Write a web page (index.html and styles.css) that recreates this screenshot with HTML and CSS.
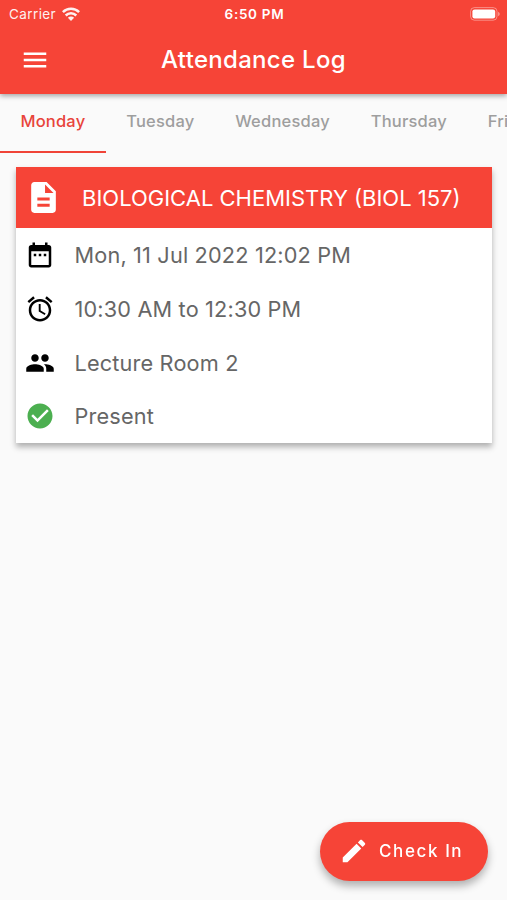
FILE: index.html
```html
<!DOCTYPE html>
<html lang="en">
<head>
    <meta charset="UTF-8">
    <meta name="viewport" content="width=device-width, initial-scale=1.0">
    <title>Attendance Log</title>
    <link rel="stylesheet" href="styles.css">
</head>
<body>
    <header class="app-bar">
        <div class="status-bar">
            <div class="carrier">
                <span>Carrier</span>
                <svg class="wifi" viewBox="0 0 18 14" fill="none" stroke="#fff" stroke-width="2.5">
                    <path d="M.9 5.100a11.500 11.500 0 0 1 16.200 0"/>
                    <path d="M3.700 8.500a7.500 7.500 0 0 1 10.600 0"/>
                    <path d="M9 13.900L5.900 10.800a4.400 4.400 0 0 1 6.200 0z" fill="#fff" stroke="none"/>
                </svg>
            </div>
            <span class="clock">6:50 PM</span>
            <svg class="battery" viewBox="0 0 30 14">
                <rect x="0.6" y="0.6" width="26.4" height="12.6" rx="3.8" fill="none" stroke="#fff" stroke-opacity="0.4"/>
                <rect x="2.4" y="2.4" width="22.8" height="9" rx="2.2" fill="#fff"/>
                <path d="M28.2 4.8v4.4q1.5-.7 1.5-2.2t-1.5-2.2z" fill="#fff" fill-opacity="0.5"/>
            </svg>
        </div>
        <div class="toolbar">
            <svg class="menu-icon" viewBox="0 0 24 24"><path d="M3 18h18v-2H3v2zm0-5h18v-2H3v2zm0-7v2h18V6H3z"/></svg>
            <h1>Attendance Log</h1>
        </div>
    </header>

    <nav class="tabs">
        <a class="tab active">Monday</a>
        <a class="tab">Tuesday</a>
        <a class="tab">Wednesday</a>
        <a class="tab">Thursday</a>
        <a class="tab">Friday</a>
    </nav>

    <main class="card">
        <div class="card-header">
            <svg class="doc-icon" viewBox="0 0 24 24"><path d="M14 2H6c-1.100 0-1.990.9-1.990 2L4 20c0 1.100.89 2 1.990 2H18c1.100 0 2-.9 2-2V8l-6-6zm2 16H8v-2h8v2zm0-4H8v-2h8v2zm-3-5V3.500L18.500 9H13z"/></svg>
            <h2>BIOLOGICAL CHEMISTRY (BIOL 157)</h2>
        </div>
        <div class="row">
            <svg viewBox="0 0 24 24"><path d="M9 11H7v2h2v-2zm4 0h-2v2h2v-2zm4 0h-2v2h2v-2zm2-7h-1V2h-2v2H8V2H6v2H5c-1.110 0-1.990.9-1.990 2L3 20c0 1.100.89 2 2 2h14c1.100 0 2-.9 2-2V6c0-1.100-.9-2-2-2zm0 16H5V9h14v11z"/></svg>
            <span>Mon, 11 Jul 2022 12:02 PM</span>
        </div>
        <div class="row">
            <svg viewBox="0 0 24 24"><path d="M22 5.720l-4.600-3.860-1.290 1.530 4.600 3.860L22 5.720zM7.880 3.390L6.600 1.860 2 5.710l1.290 1.530 4.590-3.850zM12.500 8H11v6l4.750 2.850.75-1.230-4-2.370V8zM12 4c-4.970 0-9 4.030-9 9s4.020 9 9 9c4.970 0 9-4.030 9-9s-4.030-9-9-9zm0 16c-3.870 0-7-3.130-7-7s3.130-7 7-7 7 3.130 7 7-3.130 7-7 7z"/></svg>
            <span>10:30 AM to 12:30 PM</span>
        </div>
        <div class="row">
            <svg viewBox="0 0 24 24"><path d="M16 11c1.660 0 2.990-1.340 2.990-3S17.660 5 16 5c-1.660 0-3 1.340-3 3s1.340 3 3 3zm-8 0c1.660 0 2.990-1.340 2.990-3S9.660 5 8 5C6.340 5 5 6.340 5 8s1.340 3 3 3zm0 2c-2.330 0-7 1.170-7 3.500V19h14v-2.500c0-2.330-4.670-3.500-7-3.500zm8 0c-.29 0-.62.020-.97.050 1.160.84 1.970 1.970 1.970 3.450V19h6v-2.500c0-2.330-4.670-3.500-7-3.500z"/></svg>
            <span>Lecture Room 2</span>
        </div>
        <div class="row present">
            <svg viewBox="0 0 24 24"><path d="M12 2C6.480 2 2 6.480 2 12s4.480 10 10 10 10-4.480 10-10S17.520 2 12 2zm-2 15l-5-5 1.410-1.410L10 14.170l7.590-7.590L19 8l-9 9z"/></svg>
            <span>Present</span>
        </div>
    </main>

    <button class="check-in">
        <svg viewBox="0 0 24 24"><path d="M3 17.250V21h3.750L17.810 9.940l-3.750-3.750L3 17.250zM20.710 7.040c.39-.39.39-1.020 0-1.410l-2.340-2.340c-.39-.39-1.020-.39-1.410 0l-1.830 1.830 3.750 3.750 1.830-1.830z"/></svg>
        <span>Check In</span>
    </button>
</body>
</html>
```
FILE: styles.css
```css
body {
    font-family: Inter, "Liberation Sans", sans-serif;
    background-color: #fafafa;
    height: 900px;
    margin: 0;
    overflow: hidden;
}
.app-bar {
    position: relative;
    background-color: #f64437;
    color: #fff;
    height: 94px;
    box-shadow: 0 2px 5px rgba(0, 0, 0, 0.35);
}
.status-bar {
    display: grid;
    grid-template-columns: 1fr auto 1fr;
    align-items: center;
    box-sizing: border-box;
    height: 27px;
    padding: 0 7px 0 9px;
    font-size: 13.5px;
}
.carrier {
    display: flex;
    align-items: center;
    gap: 6px;
    letter-spacing: 0.4px;
    opacity: 0.92;
}
.wifi {
    width: 18px;
    height: 14px;
}
.clock {
    font-weight: 600;
    font-size: 13.5px;
    letter-spacing: 0.7px;
}
.battery {
    width: 30px;
    height: 14px;
    justify-self: end;
}
.toolbar {
    display: grid;
    grid-template-columns: 70px 1fr 70px;
    align-items: center;
    height: 65px;
}
.menu-icon {
    width: 30px;
    height: 30px;
    margin-left: 20px;
    fill: #fff;
}
h1 {
    margin: 0;
    text-align: center;
    font-size: 24px;
    font-weight: 500;
    letter-spacing: 0.3px;
}
.tabs {
    display: flex;
    height: 59px;
    overflow: hidden;
}
.tab {
    flex: none;
    box-sizing: border-box;
    height: 58.5px;
    padding: 0 20.4px;
    line-height: 55px;
    font-size: 16.5px;
    font-weight: 500;
    letter-spacing: 0.2px;
    color: #9e9e9e;
}
.tab.active {
    color: #e8443a;
    border-bottom: 2px solid #f04438;
}
.card {
    margin: 14px 15px 0 15.5px;
    background-color: #fff;
    box-shadow: 0 4px 6px rgba(0, 0, 0, 0.3);
}
.card-header {
    display: flex;
    align-items: center;
    gap: 20px;
    height: 61px;
    padding-left: 9.5px;
    background-color: #f64437;
    color: #fff;
}
.doc-icon {
    width: 37px;
    height: 37px;
    fill: #fff;
}
h2 {
    margin: 0;
    font-size: 22px;
    font-weight: 400;
    white-space: nowrap;
}
.row {
    display: flex;
    align-items: center;
    gap: 19.5px;
    box-sizing: border-box;
    height: 53.75px;
    padding: 0.6px 0 0 9.5px;
    font-size: 21.7px;
    letter-spacing: 0.17px;
    color: #666;
}
.row svg {
    width: 30px;
    height: 30px;
    fill: #000;
}
.row.present svg {
    fill: #4caf50;
}
.check-in {
    position: fixed;
    right: 19px;
    bottom: 19px;
    display: flex;
    align-items: center;
    gap: 10px;
    width: 168px;
    height: 59px;
    padding: 0 0 1px 19px;
    border: none;
    border-radius: 30px;
    background-color: #f64437;
    color: #fff;
    font-family: inherit;
    font-size: 17px;
    font-weight: 500;
    letter-spacing: 1.6px;
    box-shadow: 0 5px 9px rgba(0, 0, 0, 0.3);
}
.check-in svg {
    width: 30px;
    height: 30px;
    fill: #fff;
}
```
